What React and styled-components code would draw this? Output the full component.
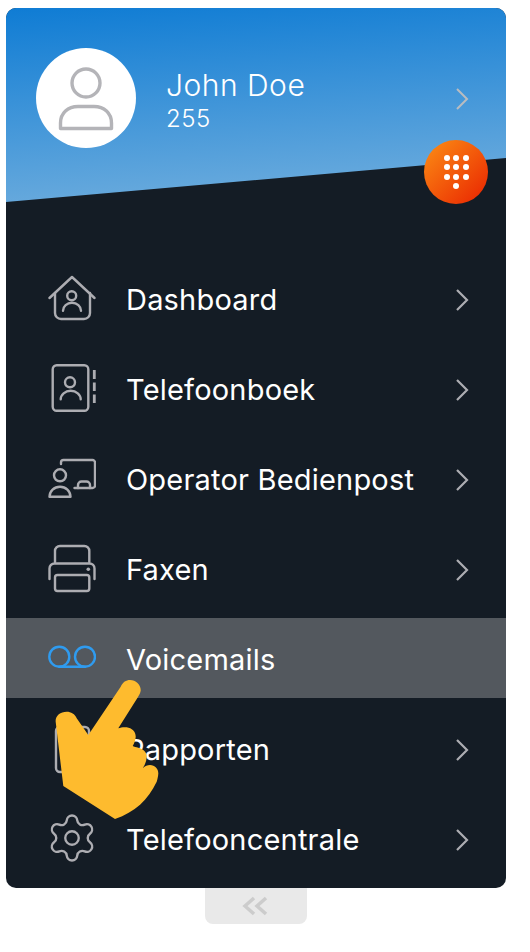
import styled, { createGlobalStyle } from "styled-components";
import { Settings } from "lucide-react";

const GlobalStyle = createGlobalStyle`
  html, body {
    margin: 0;
    background: #fff;
  }
`;

const Page = styled.div`
  position: relative;
  width: 530px;
  height: 952px;
  padding: 8px 0 0 6px;
  box-sizing: border-box;
  overflow: hidden;
  font-family: Inter, "Liberation Sans", sans-serif;
`;

const Card = styled.div`
  position: relative;
  width: 500px;
  height: 880px;
  border-radius: 10px;
  background: #141c25;
  overflow: hidden;
`;

const Header = styled.header`
  display: flex;
  align-items: flex-start;
  height: 194px;
  padding: 40px 37px 0 30px;
  box-sizing: border-box;
  background: linear-gradient(176deg, #0f7cd4 0%, #74b0de 100%);
  clip-path: polygon(0 0, 100% 0, 100% 150px, 0 100%);
`;

const Avatar = styled.div`
  display: flex;
  align-items: center;
  justify-content: center;
  flex: none;
  width: 100px;
  height: 100px;
  border-radius: 50%;
  background: #fff;
`;

const User = styled.div`
  flex: 1;
  margin-left: 30px;
  padding-top: 19px;
  color: #fff;
`;

const UserName = styled.div`
  font-size: 30px;
  font-weight: 300;
  line-height: 36px;
  letter-spacing: 0.5px;
`;

const Extension = styled.div`
  margin-top: 2px;
  font-size: 24px;
  font-weight: 300;
  line-height: 28px;
  letter-spacing: 0.5px;
`;

const HeaderArrow = styled.svg`
  align-self: flex-start;
  margin-top: 39px;
`;

const DialButton = styled.button`
  position: absolute;
  left: 418px;
  top: 132px;
  display: grid;
  grid-template-columns: repeat(3, 6px);
  grid-auto-rows: 6px;
  gap: 3.5px;
  justify-content: center;
  align-content: center;
  width: 64px;
  height: 64px;
  padding: 0;
  border: 0;
  border-radius: 50%;
  background: linear-gradient(135deg, #fc8f15 0%, #e92200 100%);
`;

const Dot = styled.span`
  grid-column: ${(p) => p.$column || "auto"};
  width: 6px;
  height: 6px;
  border-radius: 50%;
  background: #fff;
`;

const Menu = styled.nav`
  display: flex;
  flex-direction: column;
  gap: 10px;
  padding-top: 56px;
`;

const Row = styled.div`
  display: flex;
  align-items: center;
  height: 80px;
  padding: 4px 37px 0 42px;
  box-sizing: border-box;
  background: ${(p) => (p.$active ? "#53585e" : "transparent")};
  color: #fff;
`;

const IconSlot = styled.div`
  display: flex;
  align-items: center;
  justify-content: center;
  flex: none;
  width: 48px;
  height: 52px;
  color: ${(p) => (p.$active ? "#2f9bef" : "#adadb2")};
`;

const Label = styled.span`
  flex: 1;
  margin: 0 0 2px 30px;
  font-size: 29px;
  font-weight: 400;
  letter-spacing: 0.2px;
`;

const GearIcon = styled(Settings)`
  flex: none;
  margin: -5px 0 0 -1px;
`;

const Toggle = styled.div`
  display: flex;
  align-items: center;
  justify-content: center;
  width: 102px;
  height: 36px;
  margin-left: 199px;
  border-radius: 0 0 8px 8px;
  background: #e9e9e9;
`;

const Hand = styled.svg`
  position: absolute;
  left: 46px;
  top: 670px;
`;

const stroke = {
  fill: "none",
  stroke: "currentColor",
  strokeWidth: 2.4,
  strokeLinecap: "round",
  strokeLinejoin: "round",
};

const Glyph = ({ children }) => (
  <svg width="48" height="52" viewBox="0 0 48 52" {...stroke}>
    {children}
  </svg>
);

const Chevron = () => (
  <svg width="14" height="24" viewBox="0 0 14 24" fill="none" stroke="#adadb2" strokeWidth="2.200">
    <path d="M2 2 L12 12 L2 22" />
  </svg>
);

const icons = {
  home: (
    <Glyph>
      <path d="M1.500 24 L24 3 L46.500 24" />
      <path d="M7 19 V39 a6 6 0 0 0 6 6 H36 a6 6 0 0 0 6-6 V19" />
      <circle cx="23.700" cy="21.700" r="4.500" />
      <path d="M15 36.700 a9 8 0 0 1 18 0" />
    </Glyph>
  ),
  book: (
    <Glyph>
      <rect x="4.700" y="1.300" width="35.600" height="45.400" rx="4" />
      <circle cx="22" cy="18.300" r="5" />
      <path d="M12.700 35.300 a10 8.500 0 0 1 20 0" />
      <path d="M46.300 6 V15 M46.300 18.500 V27 M46.300 30.500 V39" strokeWidth="2.800" strokeLinecap="butt" />
    </Glyph>
  ),
  operator: (
    <Glyph>
      <path d="M13 10 V8.500 a2.500 2.500 0 0 1 2.500-2.500 H44.500 a2.500 2.500 0 0 1 2.500 2.500 V31.500 a2.500 2.500 0 0 1-2.500 2.500 H26.500" />
      <path d="M30 34 V31 a3.500 3.500 0 0 1 3.500-3.500 H38.500 a3.500 3.500 0 0 1 3.500 3.500 V34" />
      <circle cx="12" cy="21.300" r="6" />
      <path d="M1.500 42.700 a10.500 10 0 0 1 21 0 z" />
    </Glyph>
  ),
  printer: (
    <Glyph>
      <path d="M7 18 V7 a5 5 0 0 1 5-5 H36.300 a5 5 0 0 1 5 5 V18" />
      <path d="M1.500 35 V24.500 a5 5 0 0 1 5-5 H41.500 a5 5 0 0 1 5 5 V35" />
      <rect x="7" y="31" width="34.300" height="16" rx="2.500" />
      <circle cx="40.300" cy="25.300" r="1.800" fill="currentColor" stroke="none" />
    </Glyph>
  ),
  voicemail: (
    <Glyph>
      <circle cx="11.300" cy="22.700" r="10" />
      <circle cx="37" cy="22.700" r="10" />
      <path d="M11.300 32.700 H37" />
    </Glyph>
  ),
  report: (
    <Glyph>
      <rect x="8" y="3" width="33" height="45" rx="4" />
    </Glyph>
  ),
  gear: <GearIcon size={54} strokeWidth={1.05} />,
};

const items = [
  { label: "Dashboard", icon: "home" },
  { label: "Telefoonboek", icon: "book" },
  { label: "Operator Bedienpost", icon: "operator" },
  { label: "Faxen", icon: "printer" },
  { label: "Voicemails", icon: "voicemail", active: true },
  { label: "Rapporten", icon: "report" },
  { label: "Telefooncentrale", icon: "gear" },
];

export default function App() {
  return (
    <Page>
      <GlobalStyle />
      <Card>
        <Header>
          <Avatar>
            <svg width="60" height="70" viewBox="0 0 60 70" fill="none" stroke="#b4b4b8" strokeWidth="3.400" strokeLinejoin="round">
              <circle cx="30" cy="20" r="14" />
              <path d="M4.500 65.500 V60 C4.500 50 12 43.500 22 43.500 H38 C48 43.500 55.500 50 55.500 60 V65.500 Z" />
            </svg>
          </Avatar>
          <User>
            <UserName>John Doe</UserName>
            <Extension>255</Extension>
          </User>
          <HeaderArrow width="14" height="24" viewBox="0 0 14 24" fill="none" stroke="#b9bcc0" strokeWidth="2">
            <path d="M2 2 L12 12 L2 22" />
          </HeaderArrow>
        </Header>
        <DialButton aria-label="Kiezen">
          {Array.from({ length: 9 }, (_, i) => (
            <Dot key={i} />
          ))}
          <Dot $column="2" />
        </DialButton>
        <Menu>
          {items.map((item) => (
            <Row key={item.label} $active={item.active}>
              <IconSlot $active={item.active}>{icons[item.icon]}</IconSlot>
              <Label>{item.label}</Label>
              {!item.active && <Chevron />}
            </Row>
          ))}
        </Menu>
        <Hand width="114" height="150" viewBox="52 678 114 150" fill="#febb2e">
          <path d="M120.700 686.700 C123 682 126 680 130 680 C136 680 141 685 140.700 690.500 C140.500 693 139 695 138 697 L118.300 728.300 C120.500 727.500 123.500 727 126.700 727.300 C132 728 136 732 135.700 737 C135.500 740 134.500 743 132.700 746 C134 747 136 747.200 138.300 747.700 C143 749 147 752 146.700 757 C146.500 761 145 765 142.700 768.300 C145 766 147.500 765 150 765 C155 765 158.500 769 158.300 773.500 C158.200 776 157.500 779 156.700 781.700 C148 800 135 812 115 819 L63.300 786 L55.700 722 C55 716 60 711.700 66.700 711.700 C71 711.700 75 714 76.700 718.300 L88.300 735 Z" />
        </Hand>
      </Card>
      <Toggle>
        <svg width="28" height="20" viewBox="0 0 28 20" fill="none" stroke="#cccccc" strokeWidth="3.500">
          <path d="M12 2 L3 10 L12 18 M24 2 L15 10 L24 18" />
        </svg>
      </Toggle>
    </Page>
  );
}
